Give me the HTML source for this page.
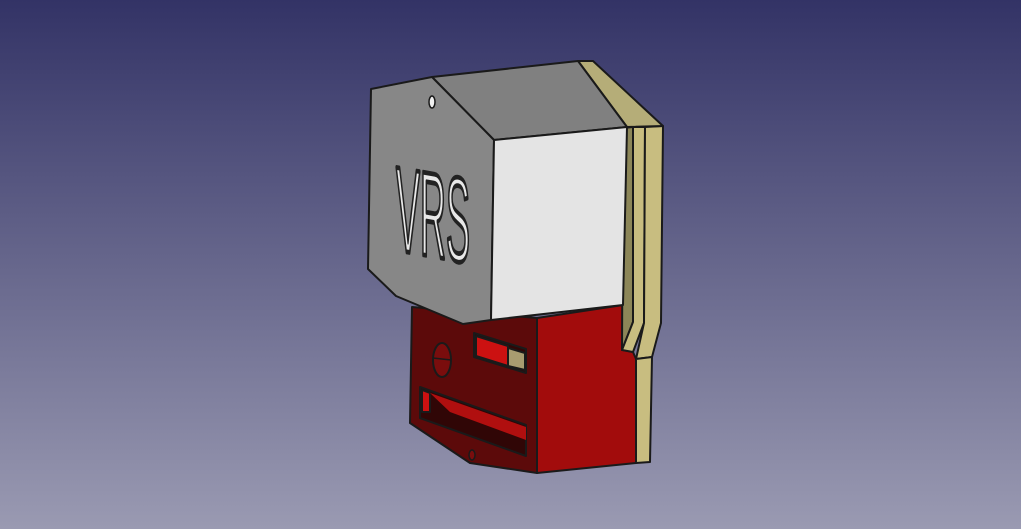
<!DOCTYPE html>
<html><head><meta charset="utf-8"><style>
html,body{margin:0;padding:0;width:1021px;height:529px;overflow:hidden}
body{background:linear-gradient(#333366,#9a9ab2)}
svg{position:absolute;left:0;top:0}
</style></head><body>
<svg width="1021" height="529" viewBox="0 0 1021 529" stroke="#1a1a1a" stroke-width="2" stroke-linejoin="round">
<polygon points="412,307 537,318 537,473 470,463 410,423" fill="#5c0a0a"/>
<polygon points="537,318 623,305 623,350 633,352 636,359 636,463 537,473" fill="#a20c0c"/>
<ellipse cx="442" cy="360" rx="9" ry="17" fill="#7a0d0d"/>
<line x1="433" y1="358" x2="451" y2="360" stroke-width="1.5"/>
<polygon points="474,333 526,349 526,373 474,357" fill="#300606"/>
<polygon points="476,336 508,346 508,366 476,356" fill="#cc1111"/>
<polygon points="508,348 525,353 525,370 508,366" fill="#a89c70"/>
<polygon points="420,387 526,425 526,456 420,418" fill="#300606"/>
<polygon points="422,390 430,393 430,412 422,412" fill="#cc1111"/>
<polygon points="430,393 526,427 526,440 450,412" fill="#b00f0f" stroke="none"/>
<ellipse cx="472" cy="455" rx="3" ry="5" fill="#7a0d0d" stroke-width="1.5"/>
<polygon points="623,128 633,127 633,322 622,350" fill="#8c8658"/>
<polygon points="633,127 645,127 644,323 633,352 622,350 633,322" fill="#c8bd80"/>
<polygon points="645,127 663,126 661,323 652,357 636,359 644,323" fill="#c8bd80"/>
<polygon points="636,359 652,357 650,462 636,463" fill="#c8bd80"/>
<polygon points="578,61 593,61 663,126 627,127" fill="#b5ad78"/>
<polygon points="432,77 578,61 627,127 494,140" fill="#808080"/>
<polygon points="371,89 432,77 494,140 491,320 463,324 396,296 368,269" fill="#878787"/>
<polygon points="494,140 627,127 623,305 491,320" fill="#e4e4e4"/>
<ellipse cx="432" cy="102" rx="3" ry="6" fill="#f0f0f0" stroke-width="1.5"/>
<text x="0" y="0" transform="translate(396,250) skewY(10) scale(0.36,1.2)" font-family="Liberation Sans, sans-serif" font-size="100" fill="#e8e8e8" stroke="#222" stroke-width="4">VRS</text>
</svg>
</body></html>
